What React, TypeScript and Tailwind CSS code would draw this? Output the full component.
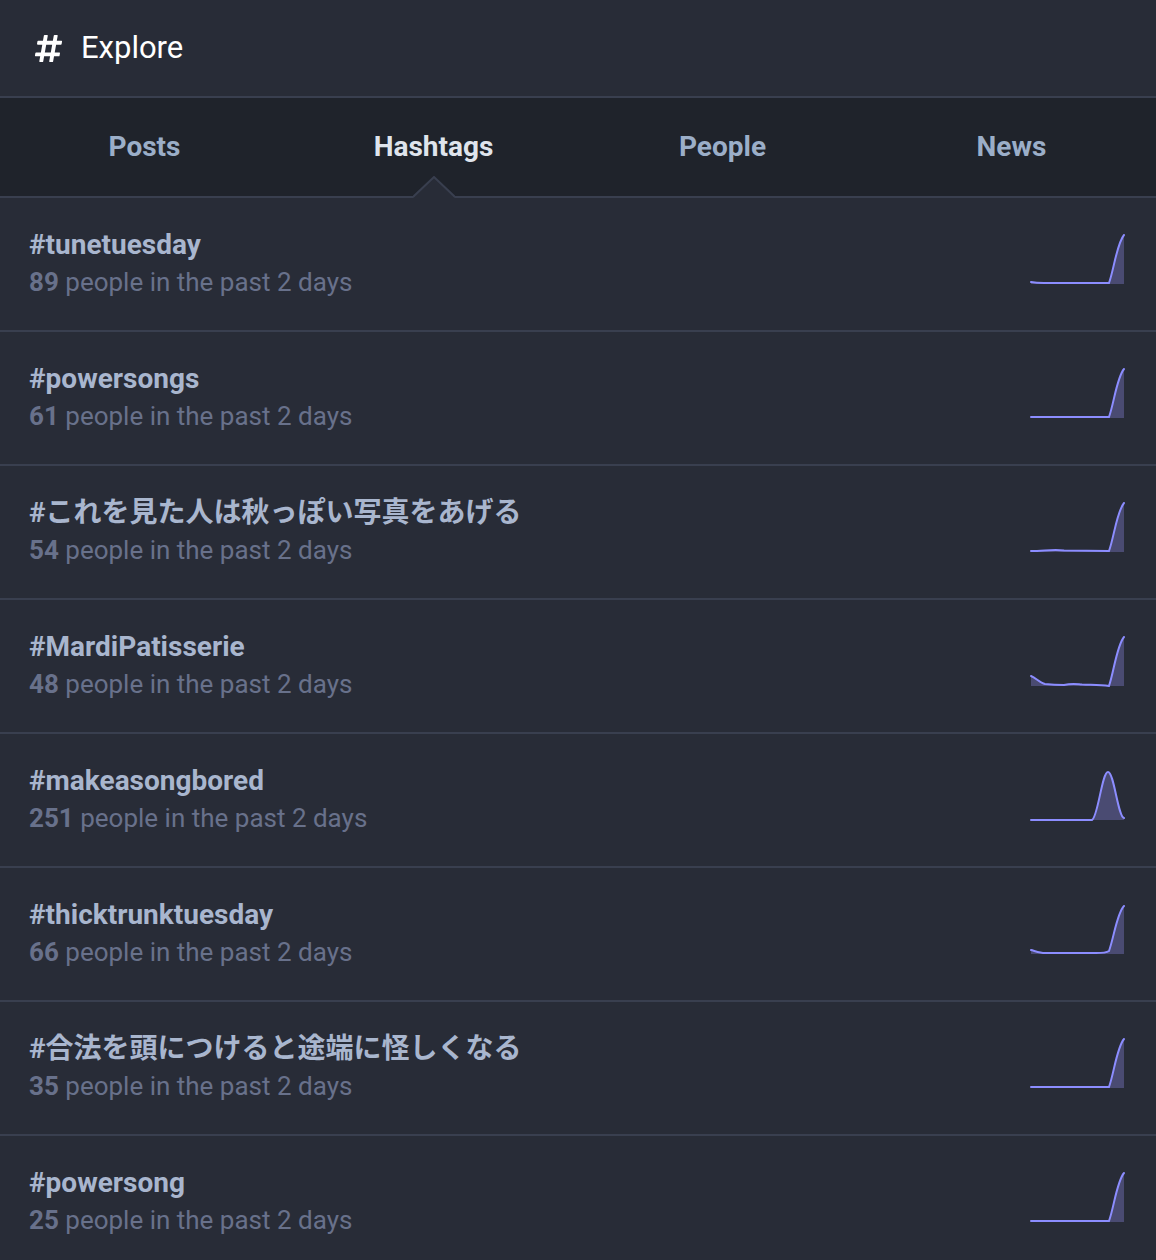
import { FaHashtag } from "react-icons/fa";

interface Trend {
  id: number;
  name: string;
  count: number;
  line: string;
}

const trends: Trend[] = [
  { id: 1, name: "#tunetuesday", count: 89, line: "M1,51 C6,52 10,52 14,52 L79,52 C84,38 87,12 94,4" },
  { id: 2, name: "#powersongs", count: 61, line: "M1,52 L79,52 C84,38 87,12 94,4" },
  { id: 3, name: "#これを見た人は秋っぽい写真をあげる", count: 54, line: "M1,52 C14,52 24,50 34,51.5 L79,52 C84,38 87,12 94,4" },
  { id: 4, name: "#MardiPatisserie", count: 48, line: "M1,43 C6,45 10,50 15,51 C24,52 28,52 34,52 C42,50 46,51 52,51.5 C62,52 70,52 79,53 C84,38 87,12 94,4" },
  { id: 5, name: "#makeasongbored", count: 251, line: "M1,53 L62,53 C68,50 72,5 78,5 C84,5 88,50 94,51" },
  { id: 6, name: "#thicktrunktuesday", count: 66, line: "M1,49 C5,50 10,52 15,52 L66,52 C72,52 76,52 79,50 C84,36 87,12 94,5" },
  { id: 7, name: "#合法を頭につけると途端に怪しくなる", count: 35, line: "M1,52 L79,52 C84,38 87,12 94,4" },
  { id: 8, name: "#powersong", count: 25, line: "M1,52 L79,52 C84,38 87,12 94,4" },
];

const tabs = ["Posts", "Hashtags", "People", "News"];

function Sparkline({ line }: { line: string }) {
  return (
    <svg width={96} height={56} viewBox="0 0 96 56" className="mt-[33px] shrink-0">
      <path d={`${line} L94,53 L1,53 Z`} fill="#4a4b72" />
      <path d={line} fill="none" stroke="#8c8dff" strokeWidth={2} strokeLinecap="round" />
    </svg>
  );
}

export default function App() {
  return (
    <div
      className="w-[1156px] min-h-[1260px] bg-[#282c37]"
      style={{ fontFamily: "Roboto, 'Noto Sans CJK JP', sans-serif" }}
    >
      <div className="h-[98px] flex items-center px-[33px] gap-[17px] border-b-2 border-[#393f4f]">
        <FaHashtag size={31} className="text-white" />
        <span className="text-[31px] text-white">Explore</span>
      </div>

      <div className="h-[100px] flex bg-[#1f232b] border-b-2 border-[#393f4f]">
        {tabs.map((tab) => (
          <div
            key={tab}
            className={`relative flex-1 flex items-center justify-center text-[28px] font-bold ${
              tab === "Hashtags" ? "text-[#dfe4ec]" : "text-[#9baec8]"
            }`}
          >
            {tab}
            {tab === "Hashtags" && (
              <svg
                width={42}
                height={22}
                viewBox="0 0 42 22"
                className="absolute bottom-[-2px] left-1/2 -translate-x-1/2"
              >
                <polygon points="0,22 21,1 42,22" fill="#282c37" />
                <polyline points="0,21 21,1 42,21" fill="none" stroke="#393f4f" strokeWidth={2} />
              </svg>
            )}
          </div>
        ))}
      </div>

      {trends.map((trend) => (
        <div
          key={trend.id}
          className="h-[134px] flex items-start justify-between pl-[29px] pr-[30px] border-b-2 border-[#393f4f]"
        >
          <div className="pt-[29px]">
            <p className="text-[28px] leading-[36px] font-bold text-[#a9b6ce]">{trend.name}</p>
            <p className="text-[26px] leading-[38px] text-[#68718b]">
              <span className="font-bold">{trend.count}</span> people in the past 2 days
            </p>
          </div>
          <Sparkline line={trend.line} />
        </div>
      ))}
    </div>
  );
}
